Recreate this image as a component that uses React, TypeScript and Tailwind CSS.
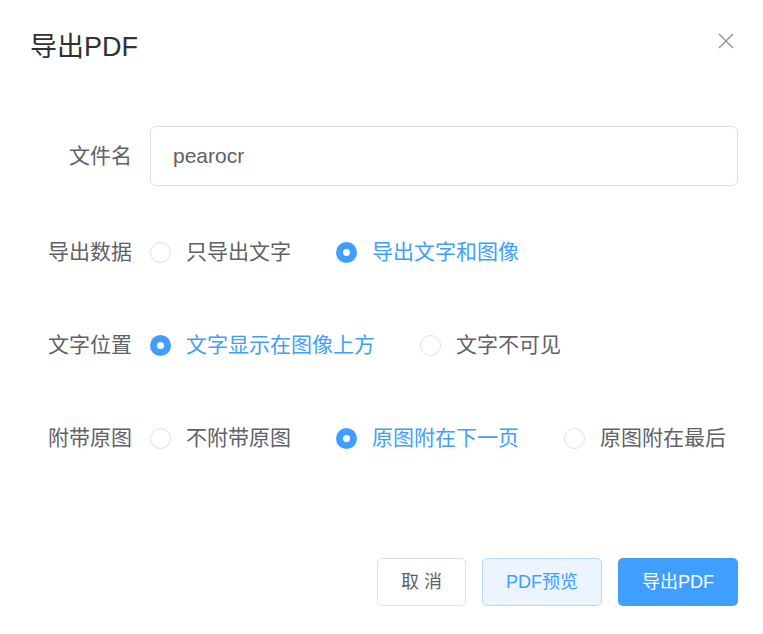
import { useState } from 'react';

type Option = { value: string; label: string };

const FONT = "font-['Liberation_Sans','Noto_Sans_CJK_SC',sans-serif]";

const Radio = ({
  options,
  value,
  onChange,
}: {
  options: Option[];
  value: string;
  onChange: (v: string) => void;
}) => (
  <div className="flex items-center">
    {options.map((o) => {
      const checked = o.value === value;
      return (
        <label
          key={o.value}
          onClick={() => onChange(o.value)}
          className="flex items-center shrink-0 whitespace-nowrap mr-[45px] last:mr-0 cursor-pointer"
        >
          {checked ? (
            <span className="w-[21px] h-[21px] shrink-0 rounded-full bg-[#409eff] flex items-center justify-center">
              <span className="w-[7px] h-[7px] rounded-full bg-white" />
            </span>
          ) : (
            <span className="w-[21px] h-[21px] shrink-0 rounded-full border border-[#dcdfe6] bg-white" />
          )}
          <span className={`pl-[15px] text-[21px] ${checked ? 'text-[#409eff]' : 'text-[#606266]'}`}>
            {o.label}
          </span>
        </label>
      );
    })}
  </div>
);

const FormRow = ({ label, children, className = '' }: { label: string; children: React.ReactNode; className?: string }) => (
  <div className={`flex items-center h-[60px] ${className}`}>
    <div className="w-[150px] pr-[18px] text-right text-[21px] text-[#606266] shrink-0">{label}</div>
    {children}
  </div>
);

export default function App() {
  const [data, setData] = useState('both');
  const [pos, setPos] = useState('above');
  const [attach, setAttach] = useState('next');

  return (
    <div className={`w-[763px] h-[634px] bg-white relative overflow-hidden ${FONT}`}>
      {/* header */}
      <div className="px-[30px] pt-[30px]">
        <div className="text-[27px] leading-[34px] text-[#303133]">导出PDF</div>
      </div>
      <button className="absolute left-[718px] top-[33px] w-[16px] h-[16px]">
        <svg viewBox="0 0 16 16" className="w-[16px] h-[16px]" fill="none" stroke="#909399" strokeWidth="1.4">
          <path d="M1 1L15 15M15 1L1 15" />
        </svg>
      </button>

      {/* form */}
      <div className="mt-[62px]">
        <FormRow label="文件名">
          <div className="w-[588px] h-[60px] border border-[#dcdfe6] rounded-[6px] flex items-center px-[22px] text-[21px] text-[#606266]">
            pearocr
          </div>
        </FormRow>
        <FormRow label="导出数据" className="mt-[36px]">
          <Radio
            value={data}
            onChange={setData}
            options={[
              { value: 'text', label: '只导出文字' },
              { value: 'both', label: '导出文字和图像' },
            ]}
          />
        </FormRow>
        <FormRow label="文字位置" className="mt-[33px]">
          <Radio
            value={pos}
            onChange={setPos}
            options={[
              { value: 'above', label: '文字显示在图像上方' },
              { value: 'hidden', label: '文字不可见' },
            ]}
          />
        </FormRow>
        <FormRow label="附带原图" className="mt-[33px]">
          <Radio
            value={attach}
            onChange={setAttach}
            options={[
              { value: 'none', label: '不附带原图' },
              { value: 'next', label: '原图附在下一页' },
              { value: 'last', label: '原图附在最后' },
            ]}
          />
        </FormRow>
      </div>

      {/* footer */}
      <div className="flex justify-end gap-[16px] pr-[25px] mt-[90px]">
        <button className="w-[89px] h-[48px] rounded-[5px] border border-[#dcdfe6] bg-white text-[18px] text-[#606266]">
          取 消
        </button>
        <button className="w-[120px] h-[48px] rounded-[5px] border border-[#b3d8ff] bg-[#ecf5ff] text-[18px] text-[#409eff]">
          PDF预览
        </button>
        <button className="w-[120px] h-[48px] rounded-[5px] bg-[#409eff] text-[18px] text-white">
          导出PDF
        </button>
      </div>
    </div>
  );
}
